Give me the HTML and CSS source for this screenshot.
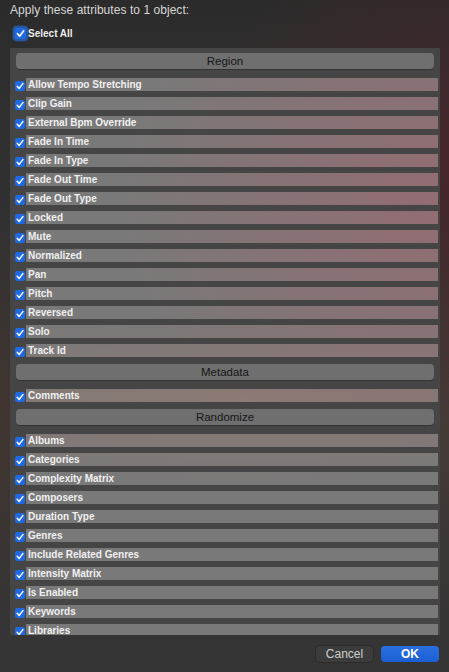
FILE: index.html
```html
<!DOCTYPE html>
<html lang="en">
<head>
<meta charset="utf-8">
<title>Apply attributes</title>
<link rel="stylesheet" href="styles.css">
</head>
<body>
<div class="dialog">
  <div class="title">Apply these attributes to 1 object:</div>
  <label class="select-all">
    <span class="cb cb-focus"><svg viewBox="0 0 10 10"><path d="M2.2 5.2 L4.2 7.4 L7.9 2.6" /></svg></span>
    <span class="select-label">Select All</span>
  </label>
  <div class="panel">
    <div class="list">
      <div class="header">Region</div>
      <div class="row"><span class="cb"><svg viewBox="0 0 10 10"><path d="M2.2 5.2 L4.2 7.4 L7.9 2.6" /></svg></span><span class="bar">Allow Tempo Stretching</span></div>
      <div class="row"><span class="cb"><svg viewBox="0 0 10 10"><path d="M2.2 5.2 L4.2 7.4 L7.9 2.6" /></svg></span><span class="bar">Clip Gain</span></div>
      <div class="row"><span class="cb"><svg viewBox="0 0 10 10"><path d="M2.2 5.2 L4.2 7.4 L7.9 2.6" /></svg></span><span class="bar">External Bpm Override</span></div>
      <div class="row"><span class="cb"><svg viewBox="0 0 10 10"><path d="M2.2 5.2 L4.2 7.4 L7.9 2.6" /></svg></span><span class="bar">Fade In Time</span></div>
      <div class="row"><span class="cb"><svg viewBox="0 0 10 10"><path d="M2.2 5.2 L4.2 7.4 L7.9 2.6" /></svg></span><span class="bar">Fade In Type</span></div>
      <div class="row"><span class="cb"><svg viewBox="0 0 10 10"><path d="M2.2 5.2 L4.2 7.4 L7.9 2.6" /></svg></span><span class="bar">Fade Out Time</span></div>
      <div class="row"><span class="cb"><svg viewBox="0 0 10 10"><path d="M2.2 5.2 L4.2 7.4 L7.9 2.6" /></svg></span><span class="bar">Fade Out Type</span></div>
      <div class="row"><span class="cb"><svg viewBox="0 0 10 10"><path d="M2.2 5.2 L4.2 7.4 L7.9 2.6" /></svg></span><span class="bar">Locked</span></div>
      <div class="row"><span class="cb"><svg viewBox="0 0 10 10"><path d="M2.2 5.2 L4.2 7.4 L7.9 2.6" /></svg></span><span class="bar">Mute</span></div>
      <div class="row"><span class="cb"><svg viewBox="0 0 10 10"><path d="M2.2 5.2 L4.2 7.4 L7.9 2.6" /></svg></span><span class="bar">Normalized</span></div>
      <div class="row"><span class="cb"><svg viewBox="0 0 10 10"><path d="M2.2 5.2 L4.2 7.4 L7.9 2.6" /></svg></span><span class="bar">Pan</span></div>
      <div class="row"><span class="cb"><svg viewBox="0 0 10 10"><path d="M2.2 5.2 L4.2 7.4 L7.9 2.6" /></svg></span><span class="bar">Pitch</span></div>
      <div class="row"><span class="cb"><svg viewBox="0 0 10 10"><path d="M2.2 5.2 L4.2 7.4 L7.9 2.6" /></svg></span><span class="bar">Reversed</span></div>
      <div class="row"><span class="cb"><svg viewBox="0 0 10 10"><path d="M2.2 5.2 L4.2 7.4 L7.9 2.6" /></svg></span><span class="bar">Solo</span></div>
      <div class="row"><span class="cb"><svg viewBox="0 0 10 10"><path d="M2.2 5.2 L4.2 7.4 L7.9 2.6" /></svg></span><span class="bar">Track Id</span></div>
      <div class="header">Metadata</div>
      <div class="row"><span class="cb"><svg viewBox="0 0 10 10"><path d="M2.2 5.2 L4.2 7.4 L7.9 2.6" /></svg></span><span class="bar">Comments</span></div>
      <div class="header">Randomize</div>
      <div class="row"><span class="cb"><svg viewBox="0 0 10 10"><path d="M2.2 5.2 L4.2 7.4 L7.9 2.6" /></svg></span><span class="bar">Albums</span></div>
      <div class="row"><span class="cb"><svg viewBox="0 0 10 10"><path d="M2.2 5.2 L4.2 7.4 L7.9 2.6" /></svg></span><span class="bar">Categories</span></div>
      <div class="row"><span class="cb"><svg viewBox="0 0 10 10"><path d="M2.2 5.2 L4.2 7.4 L7.9 2.6" /></svg></span><span class="bar">Complexity Matrix</span></div>
      <div class="row"><span class="cb"><svg viewBox="0 0 10 10"><path d="M2.2 5.2 L4.2 7.4 L7.9 2.6" /></svg></span><span class="bar">Composers</span></div>
      <div class="row"><span class="cb"><svg viewBox="0 0 10 10"><path d="M2.2 5.2 L4.2 7.4 L7.9 2.6" /></svg></span><span class="bar">Duration Type</span></div>
      <div class="row"><span class="cb"><svg viewBox="0 0 10 10"><path d="M2.2 5.2 L4.2 7.4 L7.9 2.6" /></svg></span><span class="bar">Genres</span></div>
      <div class="row"><span class="cb"><svg viewBox="0 0 10 10"><path d="M2.2 5.2 L4.2 7.4 L7.9 2.6" /></svg></span><span class="bar">Include Related Genres</span></div>
      <div class="row"><span class="cb"><svg viewBox="0 0 10 10"><path d="M2.2 5.2 L4.2 7.4 L7.9 2.6" /></svg></span><span class="bar">Intensity Matrix</span></div>
      <div class="row"><span class="cb"><svg viewBox="0 0 10 10"><path d="M2.2 5.2 L4.2 7.4 L7.9 2.6" /></svg></span><span class="bar">Is Enabled</span></div>
      <div class="row"><span class="cb"><svg viewBox="0 0 10 10"><path d="M2.2 5.2 L4.2 7.4 L7.9 2.6" /></svg></span><span class="bar">Keywords</span></div>
      <div class="row"><span class="cb"><svg viewBox="0 0 10 10"><path d="M2.2 5.2 L4.2 7.4 L7.9 2.6" /></svg></span><span class="bar">Libraries</span></div>
    </div>
  </div>
  <div class="footer">
    <button class="btn btn-cancel">Cancel</button>
    <button class="btn btn-ok">OK</button>
  </div>
</div>
</body>
</html>
```

FILE: styles.css
```css
* { box-sizing: border-box; }

html, body {
  margin: 0;
  padding: 0;
  width: 449px;
  height: 672px;
  overflow: hidden;
}

body {
  font-family: "Liberation Sans", Arial, sans-serif;
  background-color: #323131;
  background-image:
    radial-gradient(ellipse 260px 260px at 460px 170px, rgba(90, 30, 38, 0.55), rgba(90, 30, 38, 0) 100%),
    radial-gradient(ellipse 300px 200px at 20px 420px, rgba(75, 55, 45, 0.55), rgba(75, 55, 45, 0) 100%),
    radial-gradient(ellipse 220px 200px at 460px 420px, rgba(90, 70, 60, 0.45), rgba(90, 70, 60, 0) 100%),
    linear-gradient(180deg, #2b2b2b 0px, #313030 120px, #363535 672px);
  background-attachment: fixed;
  color: #e6e6e6;
}

.dialog {
  display: flex;
  flex-direction: column;
  height: 672px;
}

.title {
  height: 21px;
  line-height: 20px;
  padding-left: 10px;
  font-size: 12px;
  color: #d6d6d6;
  letter-spacing: 0.05px;
}

.select-all {
  display: flex;
  align-items: center;
  height: 21px;
  margin-top: 2px;
  padding-left: 15px;
}

.select-label {
  margin-left: 2px;
  font-size: 10px;
  font-weight: bold;
  color: #ececec;
}

.cb {
  flex: none;
  width: 10px;
  height: 10px;
  border-radius: 2px;
  background: #1f6ae3;
  display: flex;
}

.cb svg {
  width: 10px;
  height: 10px;
  fill: none;
  stroke: #ffffff;
  stroke-width: 1.5;
  stroke-linecap: round;
  stroke-linejoin: round;
}

.cb-focus {
  width: 11px;
  height: 11px;
  box-shadow: 0 0 0 2px rgba(40, 110, 220, 0.55), 0 0 0 3px rgba(40, 110, 220, 0.25);
}

.cb-focus svg {
  width: 11px;
  height: 11px;
}

.panel {
  margin: 4px 9px 0 10px;
  height: 587px;
  overflow: hidden;
  background: #454545;
}

.list {
  display: flex;
  flex-direction: column;
  gap: 6px;
  padding: 5px 2px 0 5px;
}

.header {
  flex: none;
  height: 16px;
  margin: 1px 4px 3px 1px;
  border-radius: 4px;
  background: #6f6f6f;
  box-shadow: 0 1px 0 rgba(0, 0, 0, 0.25);
  color: #161616;
  font-size: 11.5px;
  line-height: 16px;
  text-align: center;
}

.list > .header:first-child {
  margin-top: 0;
}

.row {
  flex: none;
  display: flex;
  align-items: center;
  height: 13px;
}

.row .cb {
  margin-top: 3px;
  margin-right: 1px;
}

.bar {
  flex: 1;
  height: 13px;
  padding-left: 2px;
  font-size: 10px;
  font-weight: bold;
  line-height: 13px;
  color: #f0f0f0;
  white-space: nowrap;
  background-color: #7a7979;
  background-image:
    radial-gradient(ellipse 330px 260px at 450px 200px, rgba(148, 108, 114, 1), rgba(148, 108, 114, 0) 100%),
    radial-gradient(ellipse 420px 80px at 250px 400px, rgba(140, 122, 115, 1), rgba(140, 122, 115, 0) 100%);
  background-attachment: fixed;
}

.footer {
  display: flex;
  justify-content: flex-end;
  gap: 8px;
  margin-top: 11px;
  padding-right: 10px;
}

.btn {
  height: 16px;
  border: none;
  border-radius: 4px;
  padding: 0;
  font-family: "Liberation Sans", Arial, sans-serif;
  font-size: 12px;
  line-height: 16px;
}

.btn-cancel {
  width: 57px;
  background: #3c3c3c;
  color: #cfcfcf;
  box-shadow: 0 0 0 0.5px rgba(0, 0, 0, 0.35);
}

.btn-ok {
  width: 58px;
  background: linear-gradient(180deg, #2a6fe0, #1c5fd4);
  color: #ffffff;
  font-weight: bold;
}
```
